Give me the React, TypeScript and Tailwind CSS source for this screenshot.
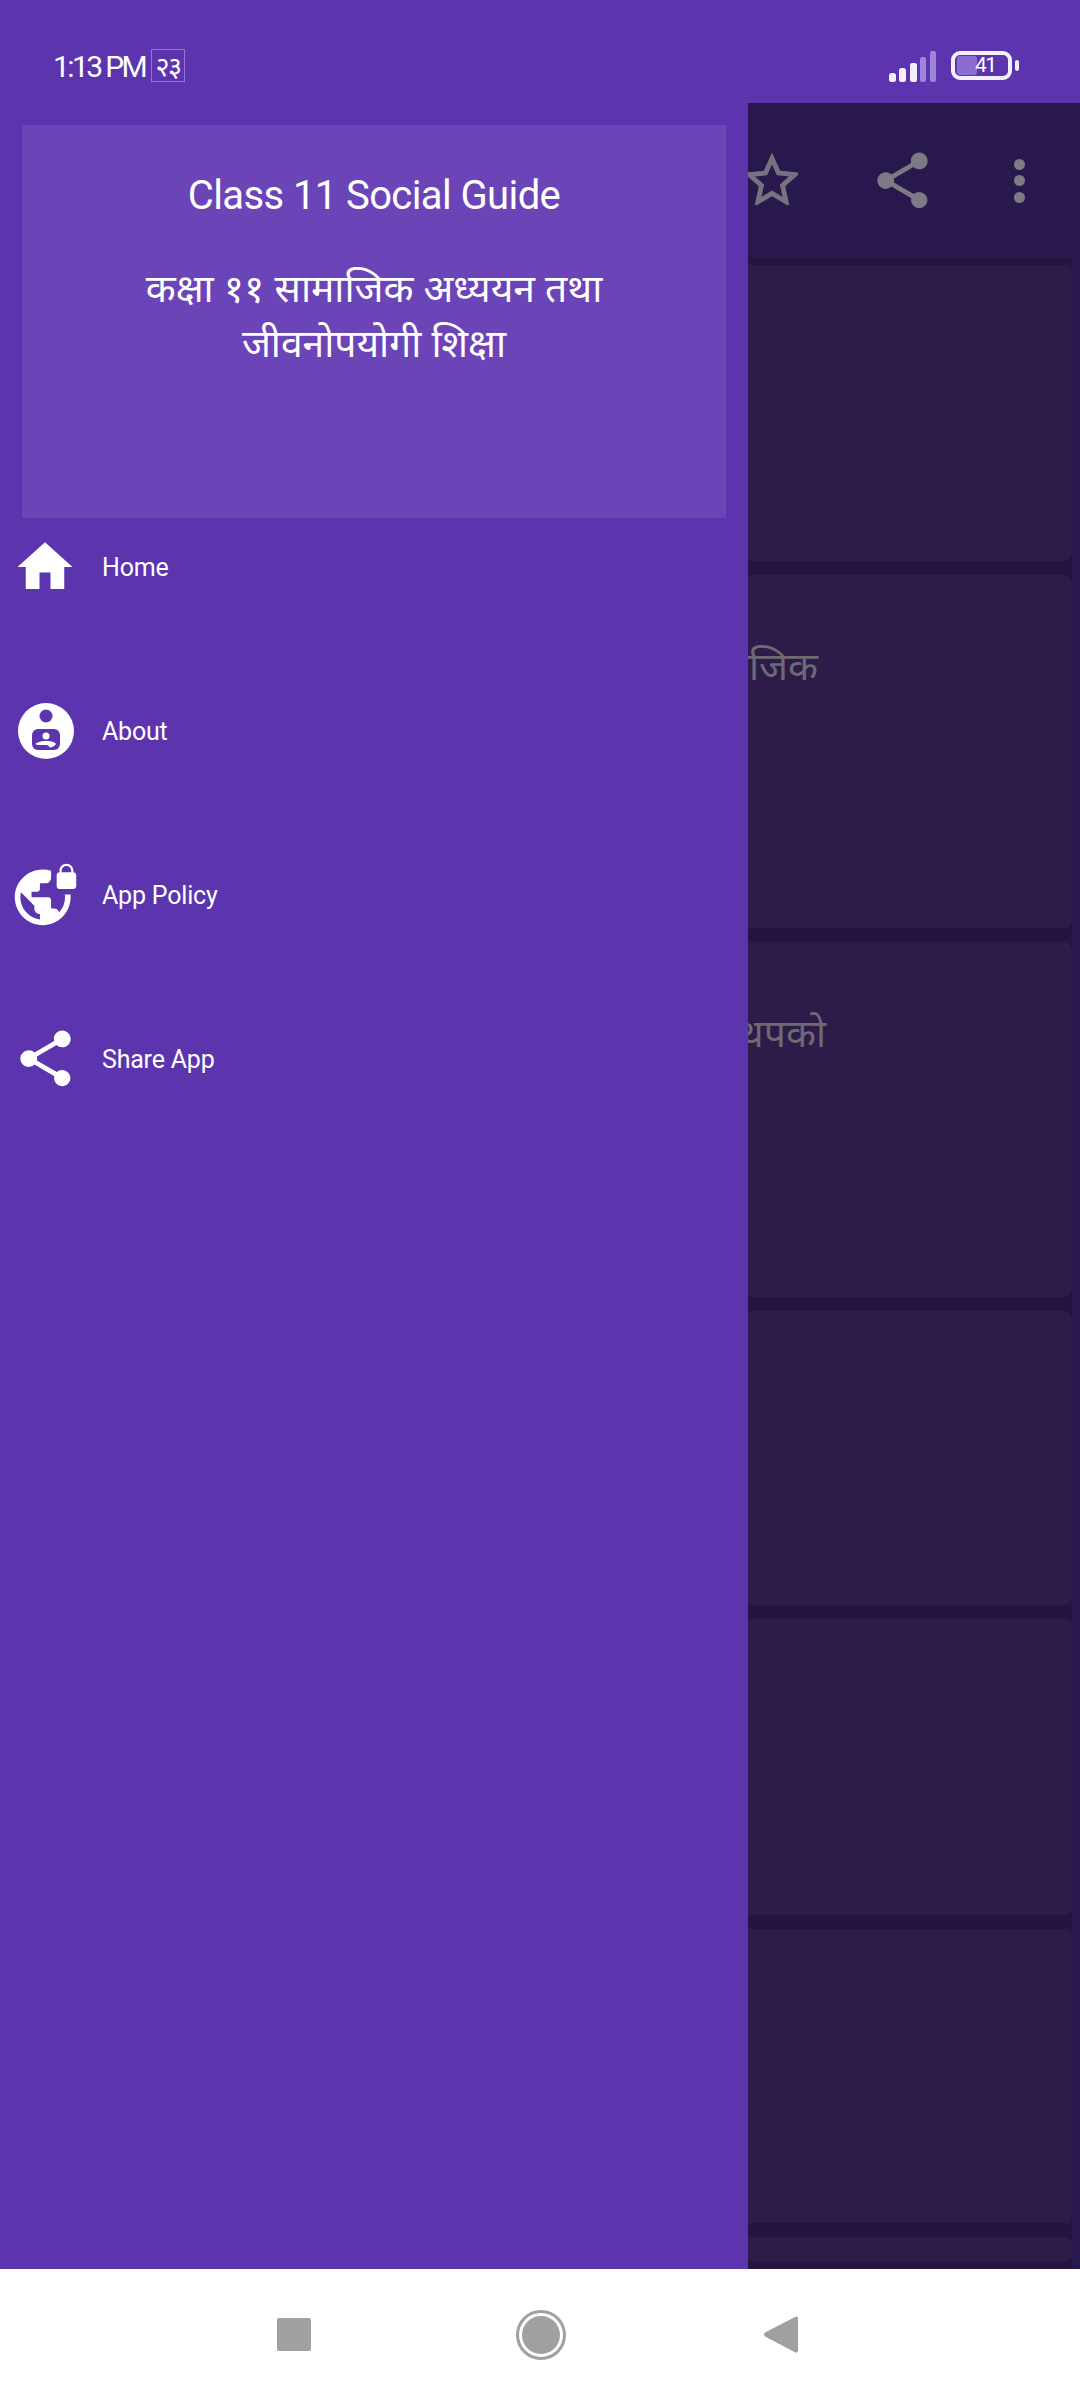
const purple = "bg-[#5b34ae]";

const HomeIcon = () => (
  <svg viewBox="0 0 24 24" className="w-[66px] h-[66px] fill-white">
    <path d="M10 20v-6h4v6h5v-8h3L12 3 2 12h3v8z" />
  </svg>
);

const AboutIcon = () => (
  <svg viewBox="0 0 56 56" className="w-[56px] h-[56px] ml-[6px]">
    <circle cx="28" cy="28" r="28" fill="#fff" />
    <circle cx="28" cy="13" r="6.5" fill="#5b34ae" />
    <rect x="14" y="26" width="28" height="21" rx="6" fill="#5b34ae" />
    <circle cx="28" cy="33" r="3.500" fill="#fff" />
    <path d="M17 41c3-2.500 8-3 12-3 4 0 8 1 9 3-1.500 2.500-4 3.500-7 3.500 1-1.500-1-2.500-3-2.500-4 0-8 .5-11-1z" fill="#fff" />
  </svg>
);

const PolicyIcon = () => (
  <svg viewBox="0 0 24 24" className="w-[67px] h-[67px] fill-white">
    <path d="M22 4v-.5C22 2.120 20.880 1 19.500 1S17 2.120 17 3.500V4c-.55 0-1 .45-1 1v4c0 .55.45 1 1 1h5c.55 0 1-.45 1-1V5c0-.55-.45-1-1-1zm-.8 0h-3.400v-.5c0-.94.76-1.700 1.700-1.700s1.700.76 1.700 1.700V4zm-2.280 8c.04.33.08.66.08 1 0 2.080-.8 3.970-2.100 5.390-.26-.81-1-1.390-1.900-1.390h-1v-3c0-.55-.45-1-1-1H7v-2h2c.55 0 1-.45 1-1V8h2c1.100 0 2-.9 2-2V3.460c-.95-.3-1.950-.46-3-.46C5.480 3 1 7.480 1 13s4.480 10 10 10 10-4.480 10-10c0-.34-.02-.67-.05-1h-2.030zM10 20.930c-3.950-.49-7-3.850-7-7.930 0-.62.08-1.210.21-1.790L8 16v1c0 1.100.9 2 2 2v1.930z" />
  </svg>
);

const SHARE =
  "M18 16.080c-.76 0-1.440.3-1.960.77L8.910 12.700c.05-.23.09-.46.09-.7s-.04-.47-.09-.7l7.050-4.110c.54.5 1.250.81 2.040.81 1.660 0 3-1.340 3-3s-1.340-3-3-3-3 1.340-3 3c0 .24.04.47.09.7L8.040 9.810C7.500 9.310 6.790 9 6 9c-1.660 0-3 1.340-3 3s1.340 3 3 3c.79 0 1.500-.31 2.040-.81l7.120 4.160c-.05.21-.08.43-.08.65 0 1.610 1.310 2.920 2.920 2.920 1.610 0 2.920-1.310 2.920-2.920s-1.310-2.920-2.920-2.920z";

const menu = [
  { label: "Home", icon: <HomeIcon /> },
  { label: "About", icon: <AboutIcon /> },
  { label: "App Policy", icon: <PolicyIcon /> },
  { label: "Share App", icon: <svg viewBox="0 0 24 24" className="w-[67px] h-[67px] fill-white"><path d={SHARE} /></svg> },
];

const StatusBar = () => (
  <div className={`h-[103px] shrink-0 flex items-start pt-[49px] pl-[53px] pr-[61px] text-white font-['Roboto',sans-serif] ${purple}`}>
    <span className="text-[30px] leading-[36px] tracking-[-2.600px] w-[98px] whitespace-nowrap">1:13 PM</span>
    <span className="w-[34px] h-[33px] border border-[#8f73d8] flex items-center justify-center text-[27px] leading-none tracking-[-1.500px] font-['Noto_Sans',sans-serif]">२३</span>
    <div className="ml-auto flex items-start gap-[15px]">
      <svg viewBox="0 0 47 31" className="w-[47px] h-[31px] mt-[2px]">
        <rect x="0" y="22" width="7" height="9" rx="2.500" fill="#f4effd" />
        <rect x="10" y="17" width="7" height="14" rx="2.500" fill="#f4effd" />
        <rect x="21" y="12" width="7" height="19" rx="2" fill="#f4effd" />
        <rect x="31" y="6" width="6" height="25" rx="2" fill="#9c85da" />
        <rect x="41" y="0" width="6" height="31" rx="2" fill="#9c85da" />
      </svg>
      <div className="flex items-center mt-[2px]">
        <div className="relative w-[61px] h-[29px] border-[4px] border-[#f4effd] rounded-[9px]">
          <div className="absolute left-[2px] top-[1px] bottom-[1px] w-[20px] rounded-[3px] bg-[#8b6ccf]" />
          <span className="absolute left-[20px] top-0 bottom-0 flex items-center text-[21px] leading-none tracking-[-1.500px] text-white">41</span>
        </div>
        <div className="w-[4px] h-[11px] rounded-full bg-[#f4effd] ml-[3px]" />
      </div>
    </div>
  </div>
);

const Drawer = () => (
  <div className={`absolute left-0 top-[103px] bottom-0 w-[748px] flex flex-col ${purple}`}>
    <div className="mx-[22px] mt-[22px] h-[393px] bg-[#6b45b8] text-white text-center pt-[43px]">
      <div className="text-[40px] leading-[56px] tracking-[-0.6px] font-['Roboto',sans-serif]">Class 11 Social Guide</div>
      <div className="mt-[35px] text-[39px] leading-[55px] font-['Noto_Sans',sans-serif]">
        कक्षा ११ सामाजिक अध्ययन तथा
        <br />
        जीवनोपयोगी शिक्षा
      </div>
    </div>
    <div className="flex flex-col gap-[97px] mt-[15px]">
      {menu.map((m) => (
        <div key={m.label} className="flex items-center h-[67px]">
          <div className="w-[102px] pl-[12px] shrink-0">{m.icon}</div>
          <span className="text-[25px] tracking-[-0.2px] pt-[2px] text-white font-['Roboto',sans-serif]">{m.label}</span>
        </div>
      ))}
    </div>
  </div>
);

const cards = [
  { h: "h-[296px]", text: "", pos: "" },
  { h: "h-[353px]", text: "सामाजिक", pos: "mr-[254px]" },
  { h: "h-[355px]", text: "थपको", pos: "mr-[246px]" },
  { h: "h-[294px]", text: "", pos: "" },
  { h: "h-[296px]", text: "", pos: "" },
  { h: "h-[294px]", text: "", pos: "" },
  { h: "h-[25px]", text: "", pos: "" },
];

const Background = () => (
  <div className="flex flex-col h-full">
    <StatusBar />
    <div className="h-[155px] shrink-0 bg-[#28184d] flex items-center justify-end pr-[55px]">
      <svg viewBox="0 0 48 48" className="w-[52px] h-[52px] -mt-[4px] fill-none stroke-[#77727f] stroke-[4.5]">
        <path d="M24 5l6 13.500 15 1.500-11.300 10 3.300 15L24 37.300 11 45l3.300-15L3 20l15-1.500z" />
      </svg>
      <svg viewBox="0 0 24 24" className="w-[67px] h-[67px] ml-[71px] -mt-[1px] fill-[#7e7a85]">
        <path d={SHARE} />
      </svg>
      <div className="flex flex-col gap-[5.500px] ml-[78px]">
        <div className="w-[11px] h-[11px] rounded-full bg-[#7e7a85]" />
        <div className="w-[11px] h-[11px] rounded-full bg-[#7e7a85]" />
        <div className="w-[11px] h-[11px] rounded-full bg-[#7e7a85]" />
      </div>
    </div>
    <div className="flex-1 min-h-0 bg-[#28184d] pr-[8px] overflow-hidden">
      <div className="bg-[#24143f] pt-[7px] flex flex-col gap-[14px] h-full">
        {cards.map((c, i) => (
          <div key={i} className={`${c.h} shrink-0 rounded-[8px] bg-[#2d1c4a] flex justify-end overflow-hidden`}>
            {c.text && (
              <span className={`mt-[62px] ${c.pos} text-[39px] leading-[55px] whitespace-nowrap text-[#6e6973] font-['Noto_Sans',sans-serif]`}>
                {c.text}
              </span>
            )}
          </div>
        ))}
      </div>
    </div>
  </div>
);

const NavBar = () => (
  <div className="h-[131px] shrink-0 bg-white flex items-start pt-[41px] pl-[277px]">
    <div className="w-[34px] h-[33px] mt-[8px] rounded-[2px] bg-[#a0a0a0]" />
    <div className="w-[50px] h-[50px] ml-[205px] rounded-full border-[3px] border-[#a0a0a0] p-[3px]">
      <div className="w-full h-full rounded-full bg-[#a0a0a0]" />
    </div>
    <svg viewBox="0 0 34 37" className="w-[34px] h-[37px] ml-[198px] mt-[6px] fill-[#a0a0a0]">
      <path d="M32 0.500c1 0 2 .5 2 2v32c0 1.500-1 2.500-2.500 2L1 20.500c-1.300-1-1.300-3 0-4z" />
    </svg>
  </div>
);

export default function App() {
  return (
    <div className="w-[1080px] h-[2400px] flex flex-col overflow-hidden">
      <div className="relative flex-1 min-h-0">
        <Background />
        <Drawer />
      </div>
      <NavBar />
    </div>
  );
}
